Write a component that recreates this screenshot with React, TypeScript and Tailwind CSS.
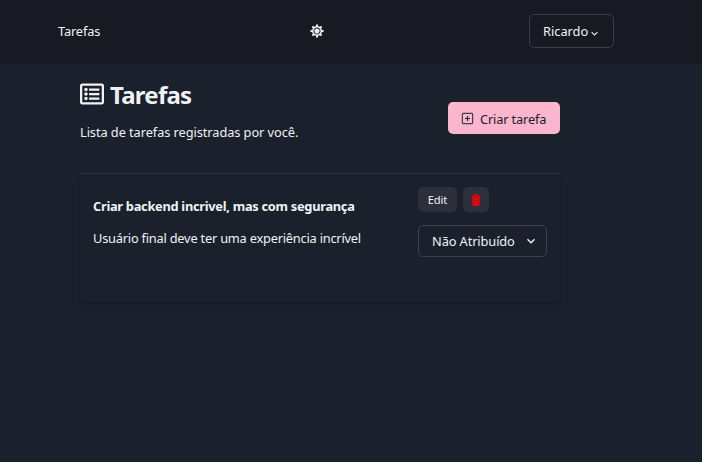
import React from "react";
import { FaSun, FaRegListAlt } from "react-icons/fa";

function ChevronDown({ className }: { className: string }) {
  return (
    <svg viewBox="0 0 24 24" className={className} fill="currentColor" aria-hidden="true">
      <path d="M16.59 8.59L12 13.17 7.41 8.59 6 10l6 6 6-6z" />
    </svg>
  );
}

function TrashIcon({ className }: { className: string }) {
  return (
    <svg viewBox="0 0 12 12" className={className} fill="currentColor" aria-hidden="true">
      <path d="M3.5 2V1.4Q3.5.3 4.6.3h2.8q1.1 0 1.1 1.1V2H11v1H1V2zM4.6 2h2.8v-.7H4.6z" fillRule="evenodd" />
      <path d="M2.2 3.5h7.6L9.4 11q0 .7-.8.7H3.4q-.8 0-.8-.7zM4.5 5v5h.5V5zM7 5v5h.5V5z" fillRule="evenodd" />
    </svg>
  );
}

function PlusSquareIcon({ className }: { className: string }) {
  return (
    <svg viewBox="0 0 13 13" className={className} fill="none" stroke="currentColor" aria-hidden="true">
      <rect x="1.4" y="1.4" width="10.2" height="10.2" rx="0.8" strokeWidth="1.2" opacity="0.8" />
      <path d="M6.5 4v5M4 6.5h5" strokeWidth="1.1" />
    </svg>
  );
}

function Header() {
  return (
    <header className="grid h-16 grid-cols-[252px_219px_85px] items-center bg-[#171923] pl-[58px]">
      <a className="text-[12.8px] tracking-[-0.15px]">Tarefas</a>
      <FaSun className="mb-0.5 size-[14px] text-[#ebebec]" />
      <button className="mb-0.5 flex h-[34px] w-[85px] items-center rounded-[5px] border border-[#3b3d46] pl-[13px] text-[12.8px]">
        <span className="w-[45px] pt-0.5 whitespace-nowrap">Ricardo</span>
        <ChevronDown className="mt-1 size-[13px]" />
      </button>
    </header>
  );
}

function TaskCard() {
  return (
    <article className="flex h-[128px] justify-between rounded-md px-[13px] pt-[13px] shadow-[0_3px_5px_-1px_rgba(0,0,0,0.08),0_2px_3px_-1px_rgba(0,0,0,0.05)]">
      <div className="flex flex-col pt-[9px] whitespace-nowrap">
        <h2 className="text-[12.8px] leading-5 font-bold tracking-[-0.27px]">Criar backend incrivel, mas com segurança</h2>
        <p className="mt-3 text-[12.8px] leading-5 tracking-[-0.21px]">Usuário final deve ter uma experiência incrível</p>
      </div>
      <div className="flex w-[129px] flex-col">
        <div className="flex gap-1.5">
          <button className="h-[25px] w-[39px] rounded-[5px] bg-[#2c303c] pt-px text-[11.2px] tracking-[-0.1px]">Edit</button>
          <button className="flex h-[25px] w-[26px] items-center justify-center rounded-[5px] bg-[#2c303c] text-[#ff0000]">
            <TrashIcon className="size-3" />
          </button>
        </div>
        <button className="mt-[13px] flex h-8 items-center justify-between rounded-[5px] border border-[#3f424d] pr-[7px] pl-[13px] text-[12.8px] tracking-[-0.1px] whitespace-nowrap">
          <span className="pt-px">Não Atribuído</span>
          <ChevronDown className="size-4" />
        </button>
      </div>
    </article>
  );
}

export default function App() {
  return (
    <div className="h-[462px] overflow-hidden bg-[#1a202c] font-['Noto_Sans','Open_Sans',sans-serif] text-[#f1f2f3]">
      <Header />
      <main className="ml-20 w-[480px]">
        <section className="flex h-[110px] justify-between border-b border-[#2c323d]">
          <div className="pt-[15px] whitespace-nowrap">
            <h1 className="flex h-8 items-center gap-1.5 text-[24px] font-bold tracking-[-0.75px]">
              <FaRegListAlt className="mb-0.5 size-6" />
              <span>Tarefas</span>
            </h1>
            <p className="mt-[11px] text-[12.8px] leading-5 tracking-[-0.07px]">Lista de tarefas registradas por você.</p>
          </div>
          <button className="mt-[38px] flex h-8 w-28 items-center rounded-[5px] bg-[#fbb6ce] pl-[13px] text-[12.8px] tracking-[-0.15px] whitespace-nowrap text-[#1a202c]">
            <PlusSquareIcon className="mr-1.5 size-[13px]" />
            <span className="pt-[3px]">Criar tarefa</span>
          </button>
        </section>
        <TaskCard />
      </main>
    </div>
  );
}
